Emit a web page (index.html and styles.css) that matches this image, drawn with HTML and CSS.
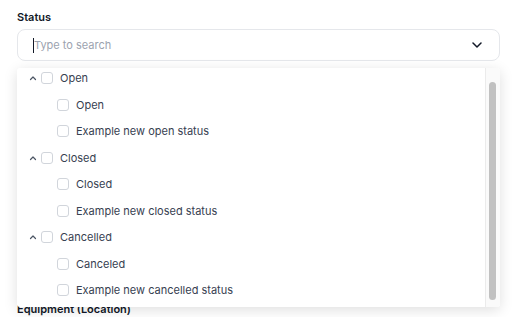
FILE: index.html
```html
<!DOCTYPE html>
<html lang="en">
<head>
  <meta charset="UTF-8">
  <title>Status filter</title>
  <link rel="stylesheet" href="styles.css">
</head>
<body>
<div class="form">

  <div class="field field-status">
    <label class="field-label">Status</label>
    <div class="select">
      <span class="caret"></span>
      <span class="placeholder">Type to search</span>
      <svg class="chevron" width="10" height="6" viewBox="0 0 10 6">
        <path d="M1 1 L5 5 L9 1" fill="none" stroke="#111827" stroke-width="1.5" stroke-linecap="round" stroke-linejoin="round"/>
      </svg>
    </div>

    <div class="dropdown">
      <div class="options">
        <div class="row group">
          <svg class="toggle" width="8" height="8" viewBox="0 0 8 8"><path d="M1.5 5.5 L4 3 L6.5 5.5" fill="none" stroke="#4b5563" stroke-width="1.2" stroke-linecap="round" stroke-linejoin="round"/></svg>
          <span class="box"></span>
          <span>Open</span>
        </div>
        <div class="row child"><span class="box"></span><span>Open</span></div>
        <div class="row child"><span class="box"></span><span>Example new open status</span></div>

        <div class="row group">
          <svg class="toggle" width="8" height="8" viewBox="0 0 8 8"><path d="M1.5 5.5 L4 3 L6.5 5.5" fill="none" stroke="#4b5563" stroke-width="1.2" stroke-linecap="round" stroke-linejoin="round"/></svg>
          <span class="box"></span>
          <span>Closed</span>
        </div>
        <div class="row child"><span class="box"></span><span>Closed</span></div>
        <div class="row child"><span class="box"></span><span>Example new closed status</span></div>

        <div class="row group">
          <svg class="toggle" width="8" height="8" viewBox="0 0 8 8"><path d="M1.5 5.5 L4 3 L6.5 5.5" fill="none" stroke="#4b5563" stroke-width="1.2" stroke-linecap="round" stroke-linejoin="round"/></svg>
          <span class="box"></span>
          <span>Cancelled</span>
        </div>
        <div class="row child"><span class="box"></span><span>Canceled</span></div>
        <div class="row child"><span class="box"></span><span>Example new cancelled status</span></div>
      </div>
      <div class="scrollbar">
        <div class="thumb"></div>
      </div>
    </div>
  </div>

  <div class="field field-equipment">
    <label class="field-label">Equipment (Location)</label>
  </div>

</div>
</body>
</html>
```

FILE: styles.css
```css
body {
  margin: 0;
  font-family: Inter, "Noto Sans", sans-serif;
  background-color: #ffffff;
  color: #111827;
}

.form {
  width: 483px;
  padding-left: 17px;
}

.field {
  position: relative;
}

.field-label {
  display: block;
  font-size: 11px;
  line-height: 16px;
  font-weight: 600;
  color: #111827;
}

.field-status .field-label {
  padding-top: 9px;
}

.field-equipment {
  margin-top: 240px;
}

.select {
  display: flex;
  align-items: center;
  height: 32px;
  margin-top: 4px;
  padding: 0 17px 0 15px;
  box-sizing: border-box;
  border: 1px solid #e5e7eb;
  border-radius: 8px;
  background-color: white;
}

.caret {
  width: 1px;
  height: 15px;
  background-color: #111827;
}

.placeholder {
  flex: 1;
  font-size: 11px;
  color: #9ca3af;
}

.dropdown {
  position: absolute;
  top: 68px;
  left: 0;
  right: 0;
  z-index: 2;
  display: flex;
  height: 239px;
  overflow: hidden;
  background-color: white;
  border-radius: 3px;
  box-shadow: 0 3px 14px rgba(0,0,0,0.13);
}

.options {
  flex: 1;
  margin-top: -3px;
}

.row {
  display: flex;
  align-items: center;
  gap: 7px;
  height: 26.5px;
  font-size: 11px;
  color: #374151;
}

.group {
  padding-left: 12px;
}

.group .toggle {
  margin-right: -3px;
}

.child {
  padding-left: 40px;
}

.box {
  width: 12px;
  height: 12px;
  box-sizing: border-box;
  border: 1px solid #d1d5db;
  border-radius: 3px;
  background-color: white;
}

.scrollbar {
  width: 14px;
  background-color: #fafafa;
  border-left: 1px solid #ebebeb;
}

.thumb {
  width: 7px;
  height: 218px;
  margin: 14px 0 0 3px;
  border-radius: 4px;
  background-color: #c1c1c1;
}
```
